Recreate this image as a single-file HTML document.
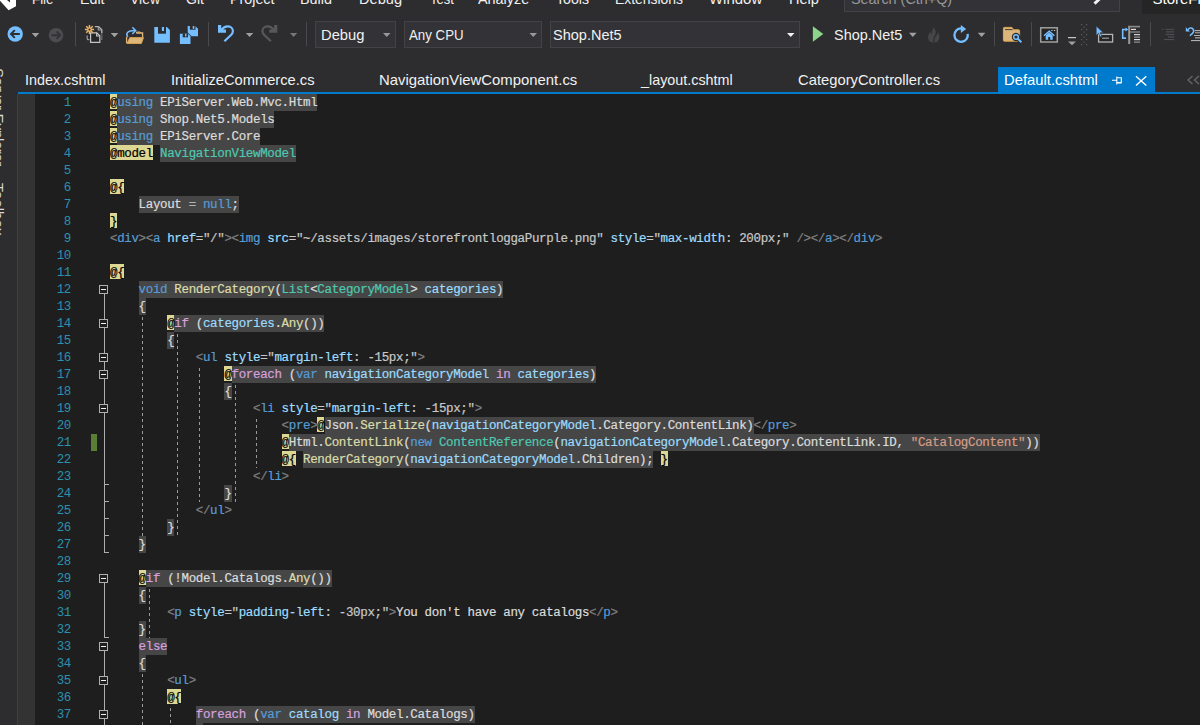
<!DOCTYPE html>
<html><head><meta charset="utf-8"><title>Visual Studio</title>
<style>
html,body{margin:0;padding:0}
html{overflow:hidden;width:1200px;height:725px}
body{width:1200px;height:725px;overflow:hidden;background:#2d2d30;position:relative;font-family:"Liberation Sans",sans-serif;font-size:15px;color:#f1f1f1}
.abs{position:absolute}
.menu span{position:absolute;transform-origin:0 0;top:-10px;line-height:17px;white-space:nowrap;color:#f1f1f1}
.tab{position:absolute;transform-origin:0 0;top:71px;line-height:17px;white-space:nowrap;color:#f1f1f1}
.combo{position:absolute;top:21px;height:25px;background:#333337;border:1px solid #434346;box-sizing:content-box}
.combo span{position:absolute;top:4px;line-height:17px;white-space:nowrap}
.ct{position:absolute;transform-origin:0 0;top:26px;line-height:17px;white-space:nowrap;color:#f1f1f1}
.mt{position:absolute;transform-origin:0 0;top:-10px;line-height:17px;white-space:nowrap}
.vt{position:absolute;left:-9.8px;line-height:17px;white-space:nowrap;color:#d8d8d8;transform-origin:0 0;transform:rotate(90deg) translateY(-17px)}
.sep{position:absolute;top:22px;width:1px;height:24px;background:#464648}
.arr{position:absolute;width:0;height:0;border-left:3.5px solid transparent;border-right:3.5px solid transparent;border-top:4px solid #999}
#ed{position:absolute;left:35px;top:94px;width:1165px;height:631px;background:#1e1e1e}
#gut{position:absolute;left:18px;top:94px;width:17px;height:631px;background:#333333}
#gutb{position:absolute;left:17px;top:94px;width:1px;height:631px;background:#3f3f46}
#bl{position:absolute;left:18px;top:92px;width:1182px;height:2px;background:#007acc}
.ln{position:absolute;left:35px;width:36px;text-align:right;height:17px;line-height:17px;font-family:"Liberation Mono",monospace;font-size:12.5px;letter-spacing:-0.35px;color:#2b91af;padding-top:1px}
.t{position:absolute;height:17px;line-height:17px;white-space:pre;font-family:"Liberation Mono",monospace;font-size:12.5px;letter-spacing:-0.35px;padding-top:1px;-webkit-text-stroke:0.2px}
.bgg{position:absolute;height:17px;background:#464646}
.bgy{position:absolute;height:15px;background:#dcd793}
.gd{position:absolute;width:1px;background:repeating-linear-gradient(to bottom,transparent 0,transparent 2px,#999 2px,#999 5px,transparent 5px,transparent 6px)}
.ob{position:absolute;left:99px;width:7px;height:7px;border:1px solid #b0b0b0;background:#1e1e1e}
.ob i{position:absolute;left:1px;top:3px;width:5px;height:1px;background:#f1f1f1}
.ol{position:absolute;left:104px;width:1px;background:#adadad}
.ot{position:absolute;left:104px;width:5px;height:1px;background:#adadad}
svg{position:absolute;overflow:visible}
</style></head><body>
<!-- menu bar -->
<div class="menu">
<span style="left:31.75px;transform:scaleX(0.8884);">File</span>
<span style="left:80.00px;transform:scaleX(0.9496);">Edit</span>
<span style="left:130.00px;transform:scaleX(0.9288);">View</span>
<span style="left:185.75px;transform:scaleX(0.9375);">Git</span>
<span style="left:230.00px;transform:scaleX(0.9529);">Project</span>
<span style="left:300.00px;transform:scaleX(0.9581);">Build</span>
<span style="left:358.75px;transform:scaleX(0.9729);">Debug</span>
<span style="left:430.00px;transform:scaleX(0.8636);">Test</span>
<span style="left:478.00px;transform:scaleX(0.9597);">Analyze</span>
<span style="left:555.75px;transform:scaleX(0.9429);">Tools</span>
<span style="left:614.50px;transform:scaleX(0.9264);">Extensions</span>
<span style="left:708.75px;transform:scaleX(0.9972);">Window</span>
<span style="left:788.75px;transform:scaleX(0.9709);">Help</span>
</div>
<svg width="20" height="12" style="left:0;top:0"><path d="M0 0.800L8.600 10.200L16 6.300V0H0z" fill="#fff"/><path d="M7 0L10 2.600V0z" fill="#2d2d30"/></svg>
<div class="abs" style="left:844px;top:-15px;width:274px;height:25px;background:#333337;border:1px solid #434346"></div>
<span class="mt" style="left:850.50px;transform:scaleX(0.9592);color:#999;">Search (Ctrl+Q)</span>
<svg width="14" height="6" style="left:1092px;top:0"><path d="M2.500 3.600L7.500 -1" stroke="#f1f1f1" stroke-width="3"/></svg>
<div class="abs" style="left:1142px;top:0;width:58px;height:14px;background:#252526"></div>
<span class="mt" style="left:1152.5px;color:#fff">StoreFront</span>
<!-- toolbar -->
<div class="combo" style="left:315px;width:79px"></div>
<div class="combo" style="left:404px;width:136px"></div>
<div class="combo" style="left:550px;width:248px"></div>
<svg width="1200" height="60" style="left:0;top:0" viewBox="0 0 1200 60">
<circle cx="15.2" cy="34" r="7.7" fill="#75beff"/>
<path d="M19.8 34H11.5M14.8 30.2L11 34l3.8 3.8" stroke="#2d2d30" stroke-width="1.9" fill="none"/>
<path d="M31.7 33h7.6l-3.8 4.2z" fill="#a0a0a0"/>
<circle cx="56" cy="35.2" r="7.3" fill="#4d4d50"/>
<path d="M51.5 35.2H60M56.6 31.5L60.3 35.2l-3.7 3.7" stroke="#333336" stroke-width="1.9" fill="none"/>
<rect x="75" y="22" width="1" height="24" fill="#4a4a4d"/>
<path d="M94.800 26.600h3.800l3.200 3.200v3.200" stroke="#b5b5b5" stroke-width="1.400" fill="none"/><path d="M101.800 33v6.300h-1" stroke="#6a6a6a" stroke-width="1.200" fill="none"/>
<path d="M98.3 26.6v3.4h3.4" stroke="#9d9d9d" stroke-width="1.2" fill="none"/>
<path d="M87.2 35.5v3.2q0 1 1 1h1.2" stroke="#9d9d9d" stroke-width="1.2" fill="none"/>
<path d="M90.6 32.8h6.2l3 3v6.6h-9.2z" stroke="#c5c5c5" stroke-width="1.2" fill="#252526"/>
<path d="M96.6 32.8v3.2h3.2" stroke="#c5c5c5" stroke-width="1.1" fill="none"/>
<path d="M84.90 29.50L94.10 29.50M86.25 26.25L92.75 32.75M89.50 24.90L89.50 34.10M92.75 26.25L86.25 32.75" stroke="#edb565" stroke-width="1.5" fill="none"/>
<circle cx="89.5" cy="29.5" r="1.1" fill="#2d2d30"/>
<path d="M110.7 33h7.6l-3.8 4.2z" fill="#a0a0a0"/>
<path d="M126.600 43.200V36.800 M136.300 33.0h6.3v4" stroke="#dcb67a" stroke-width="1.3" fill="none"/>
<path d="M136.5 33v-1h3.5l1.2 1" stroke="#dcb67a" stroke-width="1" fill="none"/>
<path d="M129.800 37.600h13.700l-2.100 5.900h-14.400z" fill="#dcb67a" stroke="#dea54c" stroke-width="0.900"/>
<path d="M127.900 36.800c-2.700-3.400-.500-6.200 7-6.200" stroke="#75beff" stroke-width="1.5" fill="none"/>
<path d="M132.300 27.200l3.400 3.400-3.400 3.400" stroke="#75beff" stroke-width="1.5" fill="none"/>
<path d="M154.3 27H166.9L169.9 30V42.7H154.3z" fill="#75beff"/><rect x="158" y="26.8" width="8" height="6.9" fill="#2d2d30"/><rect x="161.9" y="27" width="2.1" height="4" fill="#75beff"/>
<path d="M187.7 26H195.2L198 28.8V36.3H191.6L187.7 32.6z" fill="#75beff"/>
<rect x="189.9" y="25.8" width="5.6" height="3.9" fill="#2d2d30"/><rect x="192.7" y="26" width="1.6" height="2.9" fill="#75beff"/>
<path d="M179.9 33.7H188L190.5 36.2V44H179.9z" fill="#75beff"/>
<rect x="182.7" y="33.5" width="5.3" height="3.8" fill="#2d2d30"/><rect x="185" y="33.7" width="1.5" height="2.8" fill="#75beff"/>
<rect x="208" y="22" width="1" height="24" fill="#4a4a4d"/>
<path d="M218 25H221.2V29.500H226V32.800H218z" fill="#75beff"/><path d="M221 30.200L222.2 28.800" stroke="#75beff" stroke-width="2.200" fill="none"/><path d="M221.8 29.600C223.5 26.800 226 26.200 228 26.300C231 26.500 233 28.800 232.9 31.200C232.8 33 232 34 231 35L224.4 41.300" stroke="#75beff" stroke-width="2.200" fill="none"/>
<path d="M245.8 33h7.5l-3.75 4z" fill="#a0a0a0"/>
<path d="M277.3 25H274.1V29.500H269.3V32.800H277.3z" fill="#58585b"/><path d="M274.3 30.200L273.1 28.800" stroke="#58585b" stroke-width="2.200" fill="none"/><path d="M273.5 29.600C271.8 26.800 269.3 26.200 267.3 26.300C264.3 26.500 262.3 28.800 262.4 31.200C262.5 33 263.3 34 264.3 35L270.9 41.300" stroke="#58585b" stroke-width="2.200" fill="none"/>
<path d="M290 33h7.2l-3.6 4z" fill="#77777a"/>
<rect x="306" y="22" width="1" height="24" fill="#4a4a4d"/>
<path d="M383 33h7.5l-3.75 4z" fill="#999"/>
<path d="M529.5 33h7.5l-3.75 4z" fill="#999"/>
<path d="M787 33h7.5l-3.75 4z" fill="#f1f1f1"/>
<path d="M812.9 26.3V41.8L823.3 34z" fill="#8bd48a"/>
<path d="M909 32.7h7.6l-3.8 4.2z" fill="#a0a0a0"/>
<path d="M933.700 27.600C935.700 30 936.200 32.200 935.200 34.500C934.200 36.600 932.800 38.400 933.500 42.700C930.500 42.600 928.600 41 928.200 38.600C927.600 36 928.600 33.600 930.600 31.400C930.500 32.800 930.800 33.800 931.600 34.600C931.600 31.800 932.400 29.600 933.700 27.600z" fill="#464649"/>
<path d="M938 32.300C939.400 34.500 939.700 37.200 938.900 39.300C938.200 41.300 936.600 42.500 934.700 42.700C934 39.200 935.100 37.600 936.100 36.100C936.900 34.900 937.700 33.800 938 32.300z" fill="#464649"/>
<path d="M961.100 28.400A6.700 6.700 0 1 0 967.700 33.900" stroke="#75beff" stroke-width="2.300" fill="none"/>
<path d="M960.800 25V33.100L966.200 29z" fill="#75beff"/>
<path d="M977.8 32.7h7.6l-3.8 4.2z" fill="#a0a0a0"/>
<rect x="994" y="22" width="1" height="24" fill="#4a4a4d"/>
<path d="M1003.400 28.400q0-1 1-1h7.600l1.600 2.400h5q1 0 1 1V40.200q0 1-1 1h-14.200q-1 0-1-1z" fill="#dcb67a" stroke="#e0a74e" stroke-width="1"/>
<path d="M1005 29.600h7.600" stroke="#2d2d30" stroke-width="0.900"/>
<circle cx="1016" cy="37" r="4.200" fill="#2d2d30"/>
<path d="M1017.500 38.600l4 3.800" stroke="#2d2d30" stroke-width="4.200"/>
<circle cx="1016" cy="37" r="2.300" stroke="#75beff" stroke-width="1.500" fill="none"/>
<path d="M1017.800 38.800l3.600 3.400" stroke="#75beff" stroke-width="1.900"/>
<rect x="1031" y="22" width="1" height="24" fill="#4a4a4d"/>
<rect x="1040.700" y="27.800" width="16.600" height="14.200" stroke="#a0a0a0" stroke-width="1.500" fill="#252526"/>
<path d="M1044 35.800l5.200-4.600 5.200 4.600" stroke="#75beff" stroke-width="1.500" fill="none"/>
<path d="M1045.700 35.500v4.300h2.500v-2.800h2v2.800h2.500v-4.300l-3.500-3z" fill="#75beff"/>
<rect x="1051.300" y="30" width="1.300" height="1" fill="#c5c5c5"/><rect x="1053.900" y="30" width="1.300" height="1" fill="#c5c5c5"/>
<rect x="1068" y="37" width="8" height="1.200" fill="#c5c5c5"/>
<path d="M1068 41.5h8l-4.0 3.8z" fill="#a0a0a0"/>
<g fill="#5e5e62"><rect x="1081" y="24" width="1.200" height="1.200"/><rect x="1086" y="24" width="1.200" height="1.200"/><rect x="1081" y="29" width="1.200" height="1.200"/><rect x="1086" y="29" width="1.200" height="1.200"/><rect x="1081" y="34" width="1.200" height="1.200"/><rect x="1086" y="34" width="1.200" height="1.200"/><rect x="1081" y="39" width="1.200" height="1.200"/><rect x="1086" y="39" width="1.200" height="1.200"/><rect x="1081" y="44" width="1.200" height="1.200"/><rect x="1086" y="44" width="1.200" height="1.200"/><rect x="1083.500" y="26.5" width="1.200" height="1.200"/><rect x="1083.500" y="31.5" width="1.200" height="1.200"/><rect x="1083.500" y="36.5" width="1.200" height="1.200"/><rect x="1083.500" y="41.5" width="1.200" height="1.200"/></g>
<rect x="1098.600" y="34.400" width="14" height="7.600" stroke="#b4b4b4" stroke-width="1.300" fill="#252526"/>
<rect x="1102" y="37.600" width="7" height="1.200" fill="#a0a0a0"/>
<path d="M1096.200 26v9.500l2.300-2.200 1.700 3.700 1.700-.8-1.700-3.500h3.200z" fill="#75beff" stroke="#2d2d30" stroke-width="0.600"/>
<path d="M1126 29.500h-3.300v8.600h3.300" stroke="#75beff" stroke-width="1.600" fill="none"/>
<path d="M1125.500 27.500l2.800 2-2.800 2z" fill="#75beff"/>
<rect x="1128.200" y="25.800" width="2" height="18.200" fill="#9a9a9a"/>
<rect x="1128.200" y="25.800" width="11.800" height="1.600" fill="#8a8a8a"/>
<rect x="1131" y="28.800" width="5" height="1.200" fill="#e0e0e0"/>
<rect x="1130" y="31.200" width="10" height="1.600" fill="#7a7a7a"/>
<rect x="1134" y="34" width="6" height="1.200" fill="#d0d0d0"/>
<rect x="1134" y="36.500" width="6" height="1.200" fill="#9a9a9a"/>
<rect x="1134" y="39" width="6" height="1.200" fill="#e0e0e0"/>
<rect x="1134" y="41.500" width="6" height="1.300" fill="#8a8a8a"/>
<rect x="1150" y="22" width="1" height="24" fill="#4a4a4d"/>
<g fill="#4e4e52"><rect x="1161.800" y="28.800" width="1.800" height="1.100"/><rect x="1165.500" y="28.800" width="8.700" height="1.100"/><rect x="1166" y="31.200" width="8.200" height="1.300"/><rect x="1165.500" y="33.900" width="8.700" height="1.100"/><rect x="1168" y="36.300" width="6.200" height="1.300"/><rect x="1164" y="39" width="10.200" height="1.100"/></g>
<path d="M1185.800 27.300v4.200h4.200z" fill="#75beff"/>
<path d="M1188 29.600c1.500-2 3.800-2 5-.6c1.200 1.500 .6 3.300-.5 4.400l-2.700 2.300" stroke="#75beff" stroke-width="1.500" fill="none"/>
<g fill="#b0b0b0"><rect x="1195" y="30" width="5" height="1"/><rect x="1195" y="31.800" width="5" height="1.600" fill="#8a8a8a"/><rect x="1194" y="35" width="6" height="1"/><rect x="1195" y="37" width="5" height="1.600" fill="#8a8a8a"/><rect x="1191" y="40" width="9" height="1.100"/></g>
</svg>
<span class="ct" style="left:320.60px;transform:scaleX(0.9819);">Debug</span>
<span class="ct" style="left:409.40px;transform:scaleX(0.8849);">Any CPU</span>
<span class="ct" style="left:553.40px;transform:scaleX(0.9676);">Shop.Net5</span>
<span class="ct" style="left:834.20px;transform:scaleX(0.9633);">Shop.Net5</span>
<!-- tabs -->
<span class="tab" style="left:24.50px;transform:scaleX(0.9561);">Index.cshtml</span>
<span class="tab" style="left:170.50px;transform:scaleX(0.9782);">InitializeCommerce.cs</span>
<span class="tab" style="left:378.75px;transform:scaleX(0.9922);">NavigationViewComponent.cs</span>
<span class="tab" style="left:641.29px;transform:scaleX(0.9563);">_layout.cshtml</span>
<span class="tab" style="left:798.00px;transform:scaleX(0.9847);">CategoryController.cs</span>
<div class="abs" style="left:998px;top:67px;width:157px;height:27px;background:#007acc"></div>
<span class="tab" style="left:1003.75px;transform:scaleX(0.9868);color:#fff;">Default.cshtml</span>
<svg width="1200" height="30" style="left:0;top:66px" viewBox="0 66 1200 30">
<path d="M1112 80.300h4.700M1116.800 76.500v8M1117 77.800h4.300v4.800h-4.300M1117 83h4.500" stroke="#fff" stroke-width="1.100" fill="none"/>
<path d="M1136 76.200l10.300 9.400M1146.300 76.200l-10.300 9.400" stroke="#fff" stroke-width="1.400" fill="none"/>
<path d="M1192.500 76l-4.500 4 4.500 4M1199 76l-4.500 4 4.500 4" stroke="#68686b" stroke-width="1.300" fill="none"/>
</svg>
<!-- side -->
<div class="abs" style="left:0;top:0;width:10px;height:725px;overflow:hidden">
<span class="vt" style="top:67.5px;letter-spacing:-0.42px">Server Explorer</span>
<span class="vt" style="top:183px;letter-spacing:0.15px">Toolbox</span>
</div>
<div id="bl"></div>
<div id="gutb"></div><div id="gut"></div>
<div id="ed"></div>
<div class="abs" style="left:91px;top:434px;width:6px;height:17px;background:#5b7e35"></div>
<div class="ol" style="top:285px;height:268px"></div>
<div class="ol" style="top:574px;height:64px"></div>
<div class="ol" style="top:642px;height:83px"></div>
<div class="ot" style="top:484px"></div>
<div class="ot" style="top:501px"></div>
<div class="ot" style="top:518px"></div>
<div class="ot" style="top:535px"></div>
<div class="ot" style="top:552px"></div>
<div class="ot" style="top:637px"></div>
<div class="ob" style="top:285px"><i></i></div>
<div class="ob" style="top:319px"><i></i></div>
<div class="ob" style="top:353px"><i></i></div>
<div class="ob" style="top:370px"><i></i></div>
<div class="ob" style="top:404px"><i></i></div>
<div class="ob" style="top:574px"><i></i></div>
<div class="ob" style="top:642px"><i></i></div>
<div class="ob" style="top:676px"><i></i></div>
<div class="ob" style="top:710px"><i></i></div>
<div class="gd" style="left:142px;top:315px;height:221px"></div>
<div class="gd" style="left:177px;top:332px;height:204px"></div>
<div class="gd" style="left:199px;top:366px;height:136px"></div>
<div class="gd" style="left:235px;top:383px;height:119px"></div>
<div class="gd" style="left:256px;top:417px;height:51px"></div>
<div class="gd" style="left:149px;top:587px;height:51px"></div>
<div class="gd" style="left:142px;top:672px;height:53px"></div>
<div class="gd" style="left:170px;top:706px;height:19px"></div>
<div class="ln" style="top:94px">1</div>
<div class="bgy" style="left:110.00px;top:94px;width:7.15px"></div>
<div class="bgg" style="left:117.15px;top:94px;width:200.20px"></div>
<span class="t" style="left:110.00px;top:94px;color:#000000">@</span>
<span class="t" style="left:117.15px;top:94px;color:#569cd6">using</span>
<span class="t" style="left:160.05px;top:94px;color:#dcdcdc">EPiServer.Web.Mvc.Html</span>
<div class="ln" style="top:111px">2</div>
<div class="bgy" style="left:110.00px;top:111px;width:7.15px"></div>
<div class="bgg" style="left:117.15px;top:111px;width:157.30px"></div>
<span class="t" style="left:110.00px;top:111px;color:#000000">@</span>
<span class="t" style="left:117.15px;top:111px;color:#569cd6">using</span>
<span class="t" style="left:160.05px;top:111px;color:#dcdcdc">Shop.Net5.Models</span>
<div class="ln" style="top:128px">3</div>
<div class="bgy" style="left:110.00px;top:128px;width:7.15px"></div>
<div class="bgg" style="left:117.15px;top:128px;width:143.00px"></div>
<span class="t" style="left:110.00px;top:128px;color:#000000">@</span>
<span class="t" style="left:117.15px;top:128px;color:#569cd6">using</span>
<span class="t" style="left:160.05px;top:128px;color:#dcdcdc">EPiServer.Core</span>
<div class="ln" style="top:145px">4</div>
<div class="bgy" style="left:110.00px;top:145px;width:42.90px"></div>
<div class="bgg" style="left:160.05px;top:145px;width:135.85px"></div>
<span class="t" style="left:110.00px;top:145px;color:#000000">@model</span>
<span class="t" style="left:160.05px;top:145px;color:#4ec9b0">NavigationViewModel</span>
<div class="ln" style="top:162px">5</div>
<div class="ln" style="top:179px">6</div>
<div class="bgy" style="left:110.00px;top:179px;width:14.30px"></div>
<span class="t" style="left:110.00px;top:179px;color:#000000">@{</span>
<div class="ln" style="top:196px">7</div>
<div class="bgg" style="left:138.60px;top:196px;width:100.10px"></div>
<span class="t" style="left:138.60px;top:196px;color:#dcdcdc">Layout </span>
<span class="t" style="left:188.65px;top:196px;color:#b4b4b4">=</span>
<span class="t" style="left:202.95px;top:196px;color:#569cd6">null</span>
<span class="t" style="left:231.55px;top:196px;color:#dcdcdc">;</span>
<div class="ln" style="top:213px">8</div>
<div class="bgy" style="left:110.00px;top:213px;width:7.15px"></div>
<span class="t" style="left:110.00px;top:213px;color:#000000">}</span>
<div class="ln" style="top:230px">9</div>
<span class="t" style="left:110.00px;top:230px;color:#808080">&lt;</span>
<span class="t" style="left:117.15px;top:230px;color:#569cd6">div</span>
<span class="t" style="left:138.60px;top:230px;color:#808080">&gt;&lt;</span>
<span class="t" style="left:152.90px;top:230px;color:#569cd6">a</span>
<span class="t" style="left:167.20px;top:230px;color:#9cdcfe">href</span>
<span class="t" style="left:195.80px;top:230px;color:#c8c8c8">=&quot;/&quot;</span>
<span class="t" style="left:224.40px;top:230px;color:#808080">&gt;&lt;</span>
<span class="t" style="left:238.70px;top:230px;color:#569cd6">img</span>
<span class="t" style="left:267.30px;top:230px;color:#9cdcfe">src</span>
<span class="t" style="left:288.75px;top:230px;color:#c8c8c8">=&quot;~/assets/images/storefrontloggaPurple.png&quot;</span>
<span class="t" style="left:610.50px;top:230px;color:#9cdcfe">style</span>
<span class="t" style="left:646.25px;top:230px;color:#c8c8c8">=&quot;</span>
<span class="t" style="left:660.55px;top:230px;color:#9cdcfe">max-width</span>
<span class="t" style="left:724.90px;top:230px;color:#c8c8c8">: 200px;&quot;</span>
<span class="t" style="left:796.40px;top:230px;color:#808080">/&gt;&lt;/</span>
<span class="t" style="left:825.00px;top:230px;color:#569cd6">a</span>
<span class="t" style="left:832.15px;top:230px;color:#808080">&gt;&lt;/</span>
<span class="t" style="left:853.60px;top:230px;color:#569cd6">div</span>
<span class="t" style="left:875.05px;top:230px;color:#808080">&gt;</span>
<div class="ln" style="top:247px">10</div>
<div class="ln" style="top:264px">11</div>
<div class="bgy" style="left:110.00px;top:264px;width:14.30px"></div>
<span class="t" style="left:110.00px;top:264px;color:#000000">@{</span>
<div class="ln" style="top:281px">12</div>
<div class="bgg" style="left:138.60px;top:281px;width:364.65px"></div>
<span class="t" style="left:138.60px;top:281px;color:#569cd6">void</span>
<span class="t" style="left:174.35px;top:281px;color:#dcdcaa">RenderCategory</span>
<span class="t" style="left:274.45px;top:281px;color:#dcdcdc">(</span>
<span class="t" style="left:281.60px;top:281px;color:#4ec9b0">List</span>
<span class="t" style="left:310.20px;top:281px;color:#dcdcdc">&lt;</span>
<span class="t" style="left:317.35px;top:281px;color:#4ec9b0">CategoryModel</span>
<span class="t" style="left:410.30px;top:281px;color:#dcdcdc">&gt; </span>
<span class="t" style="left:424.60px;top:281px;color:#9cdcfe">categories</span>
<span class="t" style="left:496.10px;top:281px;color:#dcdcdc">)</span>
<div class="ln" style="top:298px">13</div>
<div class="bgg" style="left:138.60px;top:298px;width:7.15px"></div>
<span class="t" style="left:138.60px;top:298px;color:#dcdcdc">{</span>
<div class="ln" style="top:315px">14</div>
<div class="bgy" style="left:167.20px;top:315px;width:7.15px"></div>
<div class="bgg" style="left:174.35px;top:315px;width:150.15px"></div>
<span class="t" style="left:167.20px;top:315px;color:#000000">@</span>
<span class="t" style="left:174.35px;top:315px;color:#d8a0df">if</span>
<span class="t" style="left:195.80px;top:315px;color:#dcdcdc">(</span>
<span class="t" style="left:202.95px;top:315px;color:#9cdcfe">categories</span>
<span class="t" style="left:274.45px;top:315px;color:#dcdcdc">.</span>
<span class="t" style="left:281.60px;top:315px;color:#dcdcaa">Any</span>
<span class="t" style="left:303.05px;top:315px;color:#dcdcdc">())</span>
<div class="ln" style="top:332px">15</div>
<div class="bgg" style="left:167.20px;top:332px;width:7.15px"></div>
<span class="t" style="left:167.20px;top:332px;color:#dcdcdc">{</span>
<div class="ln" style="top:349px">16</div>
<span class="t" style="left:195.80px;top:349px;color:#808080">&lt;</span>
<span class="t" style="left:202.95px;top:349px;color:#569cd6">ul</span>
<span class="t" style="left:224.40px;top:349px;color:#9cdcfe">style</span>
<span class="t" style="left:260.15px;top:349px;color:#c8c8c8">=&quot;</span>
<span class="t" style="left:274.45px;top:349px;color:#9cdcfe">margin-left</span>
<span class="t" style="left:353.10px;top:349px;color:#c8c8c8">: -15px;&quot;</span>
<span class="t" style="left:417.45px;top:349px;color:#808080">&gt;</span>
<div class="ln" style="top:366px">17</div>
<div class="bgy" style="left:224.40px;top:366px;width:7.15px"></div>
<div class="bgg" style="left:231.55px;top:366px;width:364.65px"></div>
<span class="t" style="left:224.40px;top:366px;color:#000000">@</span>
<span class="t" style="left:231.55px;top:366px;color:#d8a0df">foreach</span>
<span class="t" style="left:288.75px;top:366px;color:#dcdcdc">(</span>
<span class="t" style="left:295.90px;top:366px;color:#569cd6">var</span>
<span class="t" style="left:324.50px;top:366px;color:#9cdcfe">navigationCategoryModel</span>
<span class="t" style="left:496.10px;top:366px;color:#d8a0df">in</span>
<span class="t" style="left:517.55px;top:366px;color:#9cdcfe">categories</span>
<span class="t" style="left:589.05px;top:366px;color:#dcdcdc">)</span>
<div class="ln" style="top:383px">18</div>
<div class="bgg" style="left:224.40px;top:383px;width:7.15px"></div>
<span class="t" style="left:224.40px;top:383px;color:#dcdcdc">{</span>
<div class="ln" style="top:400px">19</div>
<span class="t" style="left:253.00px;top:400px;color:#808080">&lt;</span>
<span class="t" style="left:260.15px;top:400px;color:#569cd6">li</span>
<span class="t" style="left:281.60px;top:400px;color:#9cdcfe">style</span>
<span class="t" style="left:317.35px;top:400px;color:#c8c8c8">=&quot;</span>
<span class="t" style="left:331.65px;top:400px;color:#9cdcfe">margin-left</span>
<span class="t" style="left:410.30px;top:400px;color:#c8c8c8">: -15px;&quot;</span>
<span class="t" style="left:474.65px;top:400px;color:#808080">&gt;</span>
<div class="ln" style="top:417px">20</div>
<div class="bgy" style="left:317.35px;top:417px;width:7.15px"></div>
<div class="bgg" style="left:324.50px;top:417px;width:429.00px"></div>
<span class="t" style="left:281.60px;top:417px;color:#808080">&lt;</span>
<span class="t" style="left:288.75px;top:417px;color:#569cd6">pre</span>
<span class="t" style="left:310.20px;top:417px;color:#808080">&gt;</span>
<span class="t" style="left:317.35px;top:417px;color:#000000">@</span>
<span class="t" style="left:324.50px;top:417px;color:#dcdcdc">Json.</span>
<span class="t" style="left:360.25px;top:417px;color:#dcdcaa">Serialize</span>
<span class="t" style="left:424.60px;top:417px;color:#dcdcdc">(</span>
<span class="t" style="left:431.75px;top:417px;color:#9cdcfe">navigationCategoryModel</span>
<span class="t" style="left:596.20px;top:417px;color:#dcdcdc">.Category.ContentLink)</span>
<span class="t" style="left:753.50px;top:417px;color:#808080">&lt;/</span>
<span class="t" style="left:767.80px;top:417px;color:#569cd6">pre</span>
<span class="t" style="left:789.25px;top:417px;color:#808080">&gt;</span>
<div class="ln" style="top:434px">21</div>
<div class="bgy" style="left:281.60px;top:434px;width:7.15px"></div>
<div class="bgg" style="left:288.75px;top:434px;width:750.75px"></div>
<span class="t" style="left:281.60px;top:434px;color:#000000">@</span>
<span class="t" style="left:288.75px;top:434px;color:#dcdcdc">Html.</span>
<span class="t" style="left:324.50px;top:434px;color:#dcdcaa">ContentLink</span>
<span class="t" style="left:403.15px;top:434px;color:#dcdcdc">(</span>
<span class="t" style="left:410.30px;top:434px;color:#569cd6">new</span>
<span class="t" style="left:438.90px;top:434px;color:#4ec9b0">ContentReference</span>
<span class="t" style="left:553.30px;top:434px;color:#dcdcdc">(</span>
<span class="t" style="left:560.45px;top:434px;color:#9cdcfe">navigationCategoryModel</span>
<span class="t" style="left:724.90px;top:434px;color:#dcdcdc">.Category.ContentLink.ID, </span>
<span class="t" style="left:910.80px;top:434px;color:#d69d85">&quot;CatalogContent&quot;</span>
<span class="t" style="left:1025.20px;top:434px;color:#dcdcdc">))</span>
<div class="ln" style="top:451px">22</div>
<div class="bgy" style="left:281.60px;top:451px;width:14.30px"></div>
<div class="bgg" style="left:303.05px;top:451px;width:350.35px"></div>
<div class="bgy" style="left:660.55px;top:451px;width:7.15px"></div>
<span class="t" style="left:281.60px;top:451px;color:#000000">@{</span>
<span class="t" style="left:303.05px;top:451px;color:#dcdcaa">RenderCategory</span>
<span class="t" style="left:403.15px;top:451px;color:#dcdcdc">(</span>
<span class="t" style="left:410.30px;top:451px;color:#9cdcfe">navigationCategoryModel</span>
<span class="t" style="left:574.75px;top:451px;color:#dcdcdc">.Children);</span>
<span class="t" style="left:660.55px;top:451px;color:#000000">}</span>
<div class="ln" style="top:468px">23</div>
<span class="t" style="left:253.00px;top:468px;color:#808080">&lt;/</span>
<span class="t" style="left:267.30px;top:468px;color:#569cd6">li</span>
<span class="t" style="left:281.60px;top:468px;color:#808080">&gt;</span>
<div class="ln" style="top:485px">24</div>
<div class="bgg" style="left:224.40px;top:485px;width:7.15px"></div>
<span class="t" style="left:224.40px;top:485px;color:#dcdcdc">}</span>
<div class="ln" style="top:502px">25</div>
<span class="t" style="left:195.80px;top:502px;color:#808080">&lt;/</span>
<span class="t" style="left:210.10px;top:502px;color:#569cd6">ul</span>
<span class="t" style="left:224.40px;top:502px;color:#808080">&gt;</span>
<div class="ln" style="top:519px">26</div>
<div class="bgg" style="left:167.20px;top:519px;width:7.15px"></div>
<span class="t" style="left:167.20px;top:519px;color:#dcdcdc">}</span>
<div class="ln" style="top:536px">27</div>
<div class="bgg" style="left:138.60px;top:536px;width:7.15px"></div>
<span class="t" style="left:138.60px;top:536px;color:#dcdcdc">}</span>
<div class="ln" style="top:553px">28</div>
<div class="ln" style="top:570px">29</div>
<div class="bgy" style="left:138.60px;top:570px;width:7.15px"></div>
<div class="bgg" style="left:145.75px;top:570px;width:185.90px"></div>
<span class="t" style="left:138.60px;top:570px;color:#000000">@</span>
<span class="t" style="left:145.75px;top:570px;color:#d8a0df">if</span>
<span class="t" style="left:167.20px;top:570px;color:#dcdcdc">(!Model.Catalogs.</span>
<span class="t" style="left:288.75px;top:570px;color:#dcdcaa">Any</span>
<span class="t" style="left:310.20px;top:570px;color:#dcdcdc">())</span>
<div class="ln" style="top:587px">30</div>
<div class="bgg" style="left:138.60px;top:587px;width:7.15px"></div>
<span class="t" style="left:138.60px;top:587px;color:#dcdcdc">{</span>
<div class="ln" style="top:604px">31</div>
<span class="t" style="left:167.20px;top:604px;color:#808080">&lt;</span>
<span class="t" style="left:174.35px;top:604px;color:#569cd6">p</span>
<span class="t" style="left:188.65px;top:604px;color:#9cdcfe">style</span>
<span class="t" style="left:224.40px;top:604px;color:#c8c8c8">=&quot;</span>
<span class="t" style="left:238.70px;top:604px;color:#9cdcfe">padding-left</span>
<span class="t" style="left:324.50px;top:604px;color:#c8c8c8">: -30px;&quot;</span>
<span class="t" style="left:388.85px;top:604px;color:#808080">&gt;</span>
<span class="t" style="left:396.00px;top:604px;color:#dcdcdc">You don&#x27;t have any catalogs</span>
<span class="t" style="left:589.05px;top:604px;color:#808080">&lt;/</span>
<span class="t" style="left:603.35px;top:604px;color:#569cd6">p</span>
<span class="t" style="left:610.50px;top:604px;color:#808080">&gt;</span>
<div class="ln" style="top:621px">32</div>
<div class="bgg" style="left:138.60px;top:621px;width:7.15px"></div>
<span class="t" style="left:138.60px;top:621px;color:#dcdcdc">}</span>
<div class="ln" style="top:638px">33</div>
<div class="bgg" style="left:138.60px;top:638px;width:28.60px"></div>
<span class="t" style="left:138.60px;top:638px;color:#d8a0df">else</span>
<div class="ln" style="top:655px">34</div>
<div class="bgg" style="left:138.60px;top:655px;width:7.15px"></div>
<span class="t" style="left:138.60px;top:655px;color:#dcdcdc">{</span>
<div class="ln" style="top:672px">35</div>
<span class="t" style="left:167.20px;top:672px;color:#808080">&lt;</span>
<span class="t" style="left:174.35px;top:672px;color:#569cd6">ul</span>
<span class="t" style="left:188.65px;top:672px;color:#808080">&gt;</span>
<div class="ln" style="top:689px">36</div>
<div class="bgy" style="left:167.20px;top:689px;width:14.30px"></div>
<span class="t" style="left:167.20px;top:689px;color:#000000">@{</span>
<div class="ln" style="top:706px">37</div>
<div class="bgg" style="left:195.80px;top:706px;width:278.85px"></div>
<span class="t" style="left:195.80px;top:706px;color:#d8a0df">foreach</span>
<span class="t" style="left:253.00px;top:706px;color:#dcdcdc">(</span>
<span class="t" style="left:260.15px;top:706px;color:#569cd6">var</span>
<span class="t" style="left:288.75px;top:706px;color:#9cdcfe">catalog</span>
<span class="t" style="left:345.95px;top:706px;color:#d8a0df">in</span>
<span class="t" style="left:367.40px;top:706px;color:#dcdcdc">Model.Catalogs)</span>
<div class="ln" style="top:723px">38</div>
<div class="bgg" style="left:195.80px;top:723px;width:7.15px"></div>
<span class="t" style="left:195.80px;top:723px;color:#dcdcdc">{</span>
</body></html>
